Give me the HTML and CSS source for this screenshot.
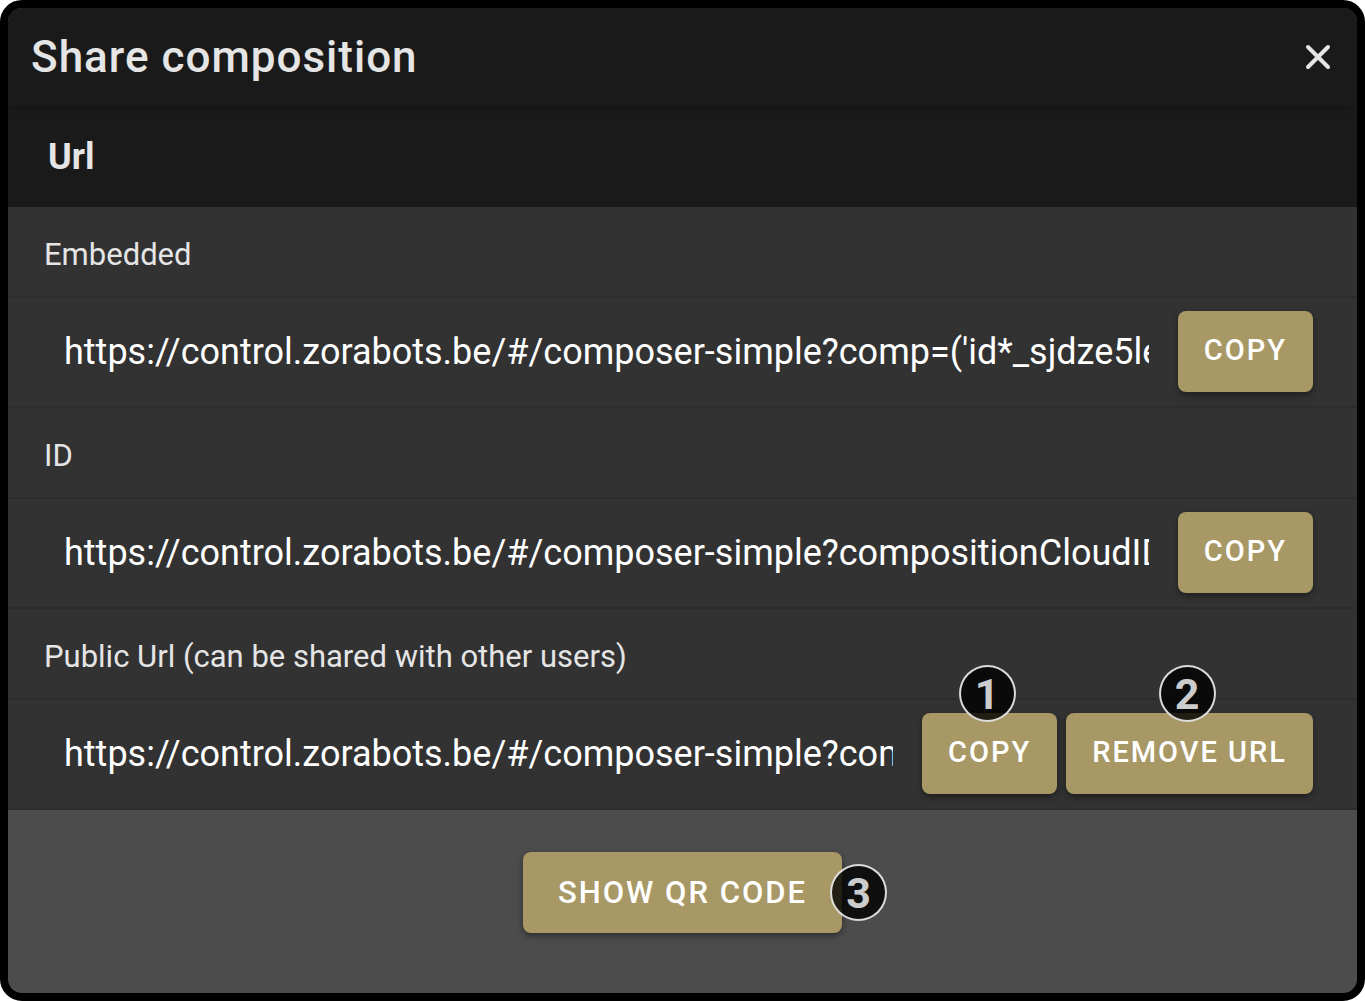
FILE: index.html
```html
<!DOCTYPE html>
<html lang="en">

<head>
    <meta charset="UTF-8">
    <meta name="viewport" content="width=device-width, initial-scale=1.0">
    <title>Share composition</title>
    <link rel="stylesheet" href="styles.css">
</head>

<body>
    <main class="dialog">
        <header class="dialog-header">
            <h1>Share composition</h1>
            <button type="button" class="close-btn" aria-label="Close">
                <svg viewBox="0 0 28 28" width="28" height="28">
                    <path d="M4 4L24 24M24 4L4 24" />
                </svg>
            </button>
        </header>

        <section class="share-list">
            <h2>Url</h2>

            <label class="share-label" for="embeddedUrl">Embedded</label>
            <div class="share-row">
                <input type="text" id="embeddedUrl" readonly value="https://control.zorabots.be/#/composer-simple?comp=('id*_sjdze5le">
                <div class="actions">
                    <button type="button" class="btn">Copy</button>
                </div>
            </div>

            <label class="share-label" for="idUrl">ID</label>
            <div class="share-row">
                <input type="text" id="idUrl" readonly value="https://control.zorabots.be/#/composer-simple?compositionCloudID=">
                <div class="actions">
                    <button type="button" class="btn">Copy</button>
                </div>
            </div>

            <label class="share-label" for="publicUrl">Public Url (can be shared with other users)</label>
            <div class="share-row">
                <input type="text" id="publicUrl" readonly value="https://control.zorabots.be/#/composer-simple?compositionCloudID=">
                <div class="actions">
                    <div class="step">
                        <button type="button" class="btn">Copy</button>
                        <span class="badge badge-top">1</span>
                    </div>
                    <div class="step">
                        <button type="button" class="btn">Remove url</button>
                        <span class="badge badge-top">2</span>
                    </div>
                </div>
            </div>
        </section>

        <footer class="dialog-footer">
            <div class="step">
                <button type="button" class="btn btn-large">Show QR code</button>
                <span class="badge badge-right">3</span>
            </div>
        </footer>
    </main>
</body>

</html>
```

FILE: styles.css
```css
* {
    box-sizing: border-box;
}

body {
    font-family: Roboto, sans-serif;
    margin: 0;
    background-color: #fff;
}

.dialog {
    display: flex;
    flex-direction: column;
    min-height: 100vh;
    border: 8px solid #000;
    border-radius: 22px;
    background-color: #4c4c4c;
    color: #e5e5e5;
    overflow: hidden;
}

.dialog-header {
    display: flex;
    justify-content: space-between;
    align-items: center;
    height: 98px;
    padding: 0 25px 0 23px;
    background-color: #1a1a1a;
    box-shadow: 0 2px 8px rgba(0, 0, 0, 0.2);
    z-index: 1;
}

.dialog-header h1 {
    margin: 0;
    font-size: 44px;
    font-weight: 500;
    letter-spacing: 1px;
}

.close-btn {
    display: flex;
    padding: 0;
    border: none;
    background: none;
    color: #e5e5e5;
    cursor: pointer;
}

.close-btn svg {
    fill: none;
    stroke: currentColor;
    stroke-width: 4;
    stroke-linecap: round;
}

.share-list h2 {
    display: flex;
    align-items: center;
    height: 101px;
    margin: 0;
    padding: 0 40px;
    background-color: #1a1a1a;
    font-size: 36px;
    font-weight: 700;
}

.share-label,
.share-row {
    display: flex;
    align-items: center;
    background-color: #323232;
    border-bottom: 2px solid #2c2c2c;
}

.share-label {
    height: 91px;
    padding: 6px 36px 0;
    font-size: 31px;
}

.share-row {
    height: 110px;
    padding: 0 44px 1px 56px;
    gap: 29px;
}

.share-row input {
    flex: 1;
    min-width: 0;
    padding: 0;
    border: none;
    outline: none;
    background: none;
    color: #fff;
    font-family: inherit;
    font-size: 36px;
}

.actions {
    display: flex;
    gap: 9px;
}

.btn {
    height: 81px;
    padding: 0 26px 3px;
    border: none;
    border-radius: 8px;
    background-color: #a89865;
    box-shadow: 0 3px 6px rgba(0, 0, 0, 0.4);
    color: #fff;
    font-family: inherit;
    font-size: 29px;
    font-weight: 500;
    letter-spacing: 2px;
    text-transform: uppercase;
    cursor: pointer;
}

.btn:hover {
    background-color: #b3a370;
}

.btn-large {
    padding: 0 35px;
    font-size: 31px;
}

.step {
    position: relative;
}

.badge {
    position: absolute;
    display: flex;
    justify-content: center;
    align-items: center;
    width: 57px;
    height: 57px;
    border: 2px solid rgba(255, 255, 255, 0.85);
    border-radius: 50%;
    background-color: rgba(0, 0, 0, 0.8);
    color: #ccc;
    font-size: 43px;
    font-weight: 700;
    pointer-events: none;
}

.badge-top {
    top: -48px;
    left: calc(50% - 31px);
}

.badge-right {
    top: 12px;
    right: -45px;
}

.dialog-footer {
    display: flex;
    flex: 1;
    justify-content: center;
    padding: 42px 0 60px;
}
```
